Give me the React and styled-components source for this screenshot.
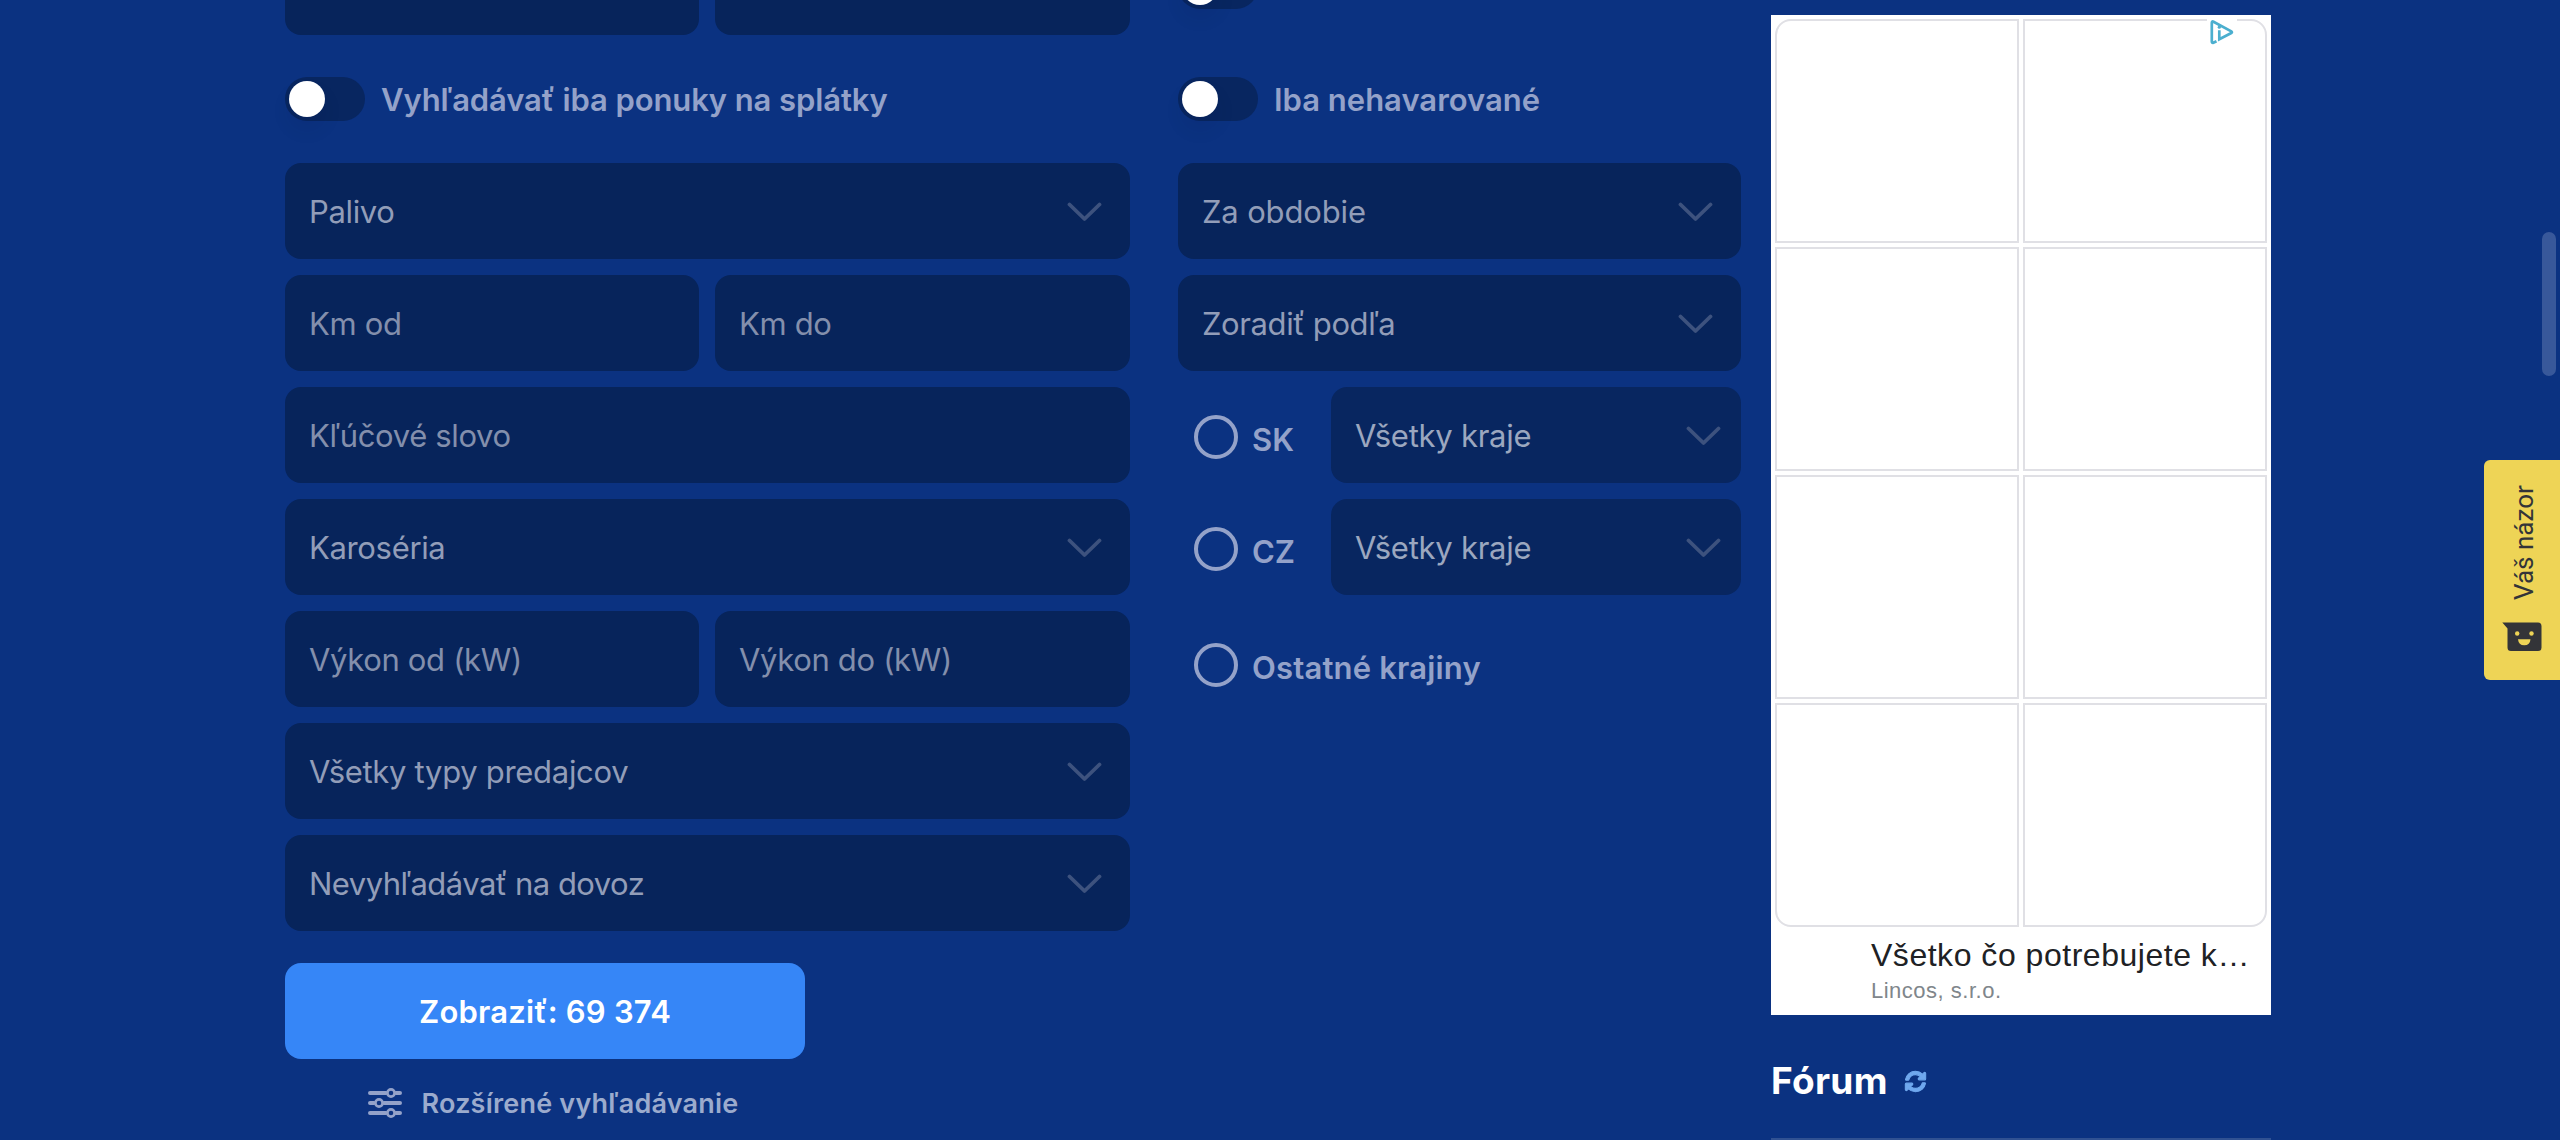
import React from "react";
import styled, { createGlobalStyle } from "styled-components";
import { FaSyncAlt } from "react-icons/fa";

const GlobalStyle = createGlobalStyle`
  *, *::before, *::after { box-sizing: border-box; }
  html, body { margin: 0; padding: 0; background: #0b3281; }
  body { font-family: Inter, "Noto Sans", sans-serif; }
`;

const Page = styled.div`
  position: relative;
  display: flex;
  width: 2560px;
  height: 1140px;
  padding-left: 285px;
  overflow: hidden;
  background: #0b3281;
`;

const Filters = styled.form`
  display: flex;
  align-items: flex-start;
  gap: 48px;
  margin: -61px 30px 0 0;
`;

const Column = styled.div`
  display: flex;
  flex-direction: column;
  gap: 16px;
  width: ${(p) => p.$width}px;
`;

const Pair = styled.div`
  display: grid;
  grid-template-columns: 414px 415px;
  gap: 16px;
`;

const Field = styled.div`
  display: flex;
  align-items: center;
  justify-content: space-between;
  flex: ${(p) => (p.$nested ? "0 0 410px" : "none")};
  height: 96px;
  padding: 1px ${(p) => (p.$nested ? 20 : 28)}px 0 24px;
  border-radius: 16px;
  background: ${(p) => (p.$nested ? "#082660" : "#07245b")};
  color: ${(p) => (p.$nested ? "#9ba7bf" : p.$input ? "#838fac" : "#929db8")};
  font-size: 31px;
  line-height: 38px;
  letter-spacing: ${(p) => p.$tracking ?? -0.34}px;
  white-space: nowrap;
`;

const ToggleRow = styled.label`
  display: flex;
  align-items: center;
  flex: none;
  gap: 16px;
  height: 96px;
`;

const Track = styled.span`
  display: flex;
  align-items: center;
  width: 80px;
  height: 44px;
  padding: 0 4px;
  border-radius: 22px;
  background: #082660;
`;

const Knob = styled.span`
  width: 36px;
  height: 36px;
  border-radius: 50%;
  background: #fff;
  box-shadow: 0 12px 20px rgba(0, 10, 50, 0.08);
`;

const Label = styled.span`
  padding-top: ${(p) => p.$drop ?? 1}px;
  color: #94a2c9;
  font-size: 31px;
  font-weight: 600;
  line-height: 38px;
  letter-spacing: ${(p) => p.$tracking ?? 0}px;
  white-space: nowrap;
`;

const RegionRow = styled.div`
  display: flex;
  align-items: center;
  justify-content: space-between;
  height: 96px;
  padding-left: 16px;
`;

const RadioLabel = styled.label`
  display: flex;
  align-items: center;
  gap: 14px;
  padding-top: ${(p) => p.$shift}px;
`;

const Radio = styled.span`
  width: 44px;
  height: 44px;
  border: 4px solid #94a2c9;
  border-radius: 50%;
`;

const Actions = styled.div`
  display: flex;
  flex-direction: column;
  align-items: center;
  width: 520px;
  margin-top: 16px;
`;

const Submit = styled.button`
  width: 100%;
  height: 96px;
  padding: 1px 0 0;
  border: 0;
  border-radius: 16px;
  background: #3686f7;
  color: #fff;
  font: 600 31px/38px Inter, sans-serif;
  letter-spacing: 0.22px;
`;

const Advanced = styled.a`
  display: flex;
  align-items: center;
  gap: 19px;
  height: 88px;
  margin-left: 17px;
  color: #9babcd;
  font-size: 27px;
  font-weight: 600;
  letter-spacing: 0.21px;
  white-space: nowrap;
`;

const Aside = styled.aside`
  display: flex;
  flex-direction: column;
  width: 500px;
  padding-top: 15px;
`;

const Ad = styled.section`
  position: relative;
  flex: none;
  height: 1000px;
  padding: 4px;
  background: #fff;
`;

const AdGrid = styled.div`
  display: grid;
  grid-template-columns: 1fr 1fr;
  grid-template-rows: repeat(4, 224px);
  gap: 4px;
`;

const AdTile = styled.div`
  border: 2px solid #e0e0e5;
  border-radius: ${(p) => p.$corners};
`;

const AdChoices = styled.div`
  position: absolute;
  top: 0;
  right: 34px;
  display: flex;
  align-items: flex-end;
  justify-content: center;
  width: 30px;
  height: 30px;
  background: #fff;
`;

const AdCopy = styled.div`
  padding: 10px 0 0 96px;
  font-family: "Liberation Sans", Arial, sans-serif;
  white-space: nowrap;
`;

const AdTitle = styled.div`
  color: #202124;
  font-size: 32px;
  line-height: 36px;
  letter-spacing: 0.52px;
`;

const AdSeller = styled.div`
  padding-top: 3px;
  color: #80868b;
  font-size: 22px;
  line-height: 30px;
  letter-spacing: 0.5px;
`;

const ForumHead = styled.header`
  display: flex;
  align-items: center;
  gap: 17px;
  flex: none;
  height: 125px;
  padding-top: 10px;
  border-bottom: 2px solid #305192;

  svg {
    overflow: visible;
    stroke: #6fa8ee;
    stroke-width: 26px;
  }
`;

const ForumTitle = styled.h2`
  margin: 0;
  padding: 0 0 2px;
  color: #fff;
  font-size: 37px;
  font-weight: 700;
  line-height: 44px;
  letter-spacing: 0.3px;
`;

const Feedback = styled.button`
  position: absolute;
  top: 460px;
  right: 0;
  display: flex;
  flex-direction: column;
  align-items: center;
  width: 76px;
  height: 220px;
  padding: 24px 0 0;
  border: 0;
  border-radius: 6px 0 0 6px;
  background: #eed456;
  color: #333438;
`;

const FeedbackText = styled.span`
  height: 118px;
  margin: 0 0 20px 3px;
  font: 400 26px/30px Roboto, sans-serif;
  writing-mode: vertical-rl;
  transform: rotate(180deg);
  white-space: nowrap;
`;

const Scrollbar = styled.div`
  position: absolute;
  top: 232px;
  right: 4px;
  width: 14px;
  height: 144px;
  border-radius: 7px;
  background: #38589a;
`;

const Chevron = () => (
  <svg width="35" height="20" viewBox="0 0 35 20" fill="none">
    <path d="M2.5 2.5 L17.5 17 L32.5 2.5" stroke="#3d527e" strokeWidth="3.8" strokeLinecap="round" strokeLinejoin="round" />
  </svg>
);

const SlidersIcon = () => (
  <svg width="34" height="30" viewBox="0 0 34 30" fill="none" stroke="#94a2c9" strokeLinecap="round">
    <path strokeWidth="4" d="M2 5H18M28 5H32M2 15H6M16 15H32M2 25H18M28 25H32" />
    <g strokeWidth="2.6">
      <circle cx="23" cy="5" r="3.6" />
      <circle cx="11" cy="15" r="3.6" />
      <circle cx="23" cy="25" r="3.6" />
    </g>
  </svg>
);

const AdChoicesIcon = () => (
  <svg width="24" height="25" viewBox="0 0 24 25" fill="none">
    <path d="M6.5 21.3 L3.4 22.8 Q1.8 23.3 1.8 21.5 V2.9 Q1.8 0.9 3.500 1.700 L21.300 11.300 Q22.600 12.200 21.300 13 L9.300 19.300 V10.200" stroke="#4bafcf" strokeWidth="2.7" />
    <circle cx="9.3" cy="7.2" r="1.6" fill="#4bafcf" />
  </svg>
);

const SmileyIcon = () => (
  <svg width="40" height="30" viewBox="0 0 40 30">
    <path d="M0.3 0.5H36Q39.5 0.5 39.5 4V25.5Q39.5 29 36 29H9Q5.5 29 5.5 25.5V6.5Z" fill="#333438" />
    <circle cx="15.2" cy="11.5" r="2.2" fill="#eed456" />
    <circle cx="29.5" cy="11.5" r="2.2" fill="#eed456" />
    <path d="M16 17.3H28.5Q28 23.3 22.25 23.3Q16.5 23.3 16 17.3Z" fill="#eed456" />
  </svg>
);

const Select = ({ children, ...rest }) => (
  <Field {...rest}>
    <span>{children}</span>
    <Chevron />
  </Field>
);

const Toggle = ({ children, tracking }) => (
  <ToggleRow>
    <Track><Knob /></Track>
    {children && <Label $tracking={tracking}>{children}</Label>}
  </ToggleRow>
);

const tileCorners = ["16px 0 0 0", "0 16px 0 0", "0", "0", "0", "0", "0 0 0 16px", "0 0 16px 0"];

export default function App() {
  return (
    <Page>
      <GlobalStyle />
      <Filters>
        <Column $width={845}>
          <Pair><Field /><Field /></Pair>
          <Toggle tracking={-0.1}>Vyhľadávať iba ponuky na splátky</Toggle>
          <Select>Palivo</Select>
          <Pair><Field $input>Km od</Field><Field $input>Km do</Field></Pair>
          <Field $input>Kľúčové slovo</Field>
          <Select>Karoséria</Select>
          <Pair><Field $input>Výkon od (kW)</Field><Field $input>Výkon do (kW)</Field></Pair>
          <Select $tracking={-0.3}>Všetky typy predajcov</Select>
          <Select $tracking={-0.54}>Nevyhľadávať na dovoz</Select>
          <Actions>
            <Submit type="button">Zobraziť: 69 374</Submit>
            <Advanced><SlidersIcon />Rozšírené vyhľadávanie</Advanced>
          </Actions>
        </Column>
        <Column $width={563}>
          <Toggle />
          <Toggle>Iba nehavarované</Toggle>
          <Select $tracking={-0.15}>Za obdobie</Select>
          <Select $tracking={-0.4}>Zoradiť podľa</Select>
          {["SK", "CZ"].map((code) => (
            <RegionRow key={code}>
              <RadioLabel $shift={4}><Radio /><Label $drop={5}>{code}</Label></RadioLabel>
              <Select $nested $tracking={-0.26}>Všetky kraje</Select>
            </RegionRow>
          ))}
          <RegionRow>
            <RadioLabel $shift={12}><Radio /><Label $drop={5} $tracking={0.18}>Ostatné krajiny</Label></RadioLabel>
          </RegionRow>
        </Column>
      </Filters>
      <Aside>
        <Ad>
          <AdGrid>
            {tileCorners.map((corners, i) => <AdTile key={i} $corners={corners} />)}
          </AdGrid>
          <AdChoices><AdChoicesIcon /></AdChoices>
          <AdCopy>
            <AdTitle>Všetko čo potrebujete k…</AdTitle>
            <AdSeller>Lincos, s.r.o.</AdSeller>
          </AdCopy>
        </Ad>
        <ForumHead>
          <ForumTitle>Fórum</ForumTitle>
          <FaSyncAlt size={21} color="#6fa8ee" />
        </ForumHead>
      </Aside>
      <Scrollbar />
      <Feedback type="button">
        <FeedbackText>Váš názor</FeedbackText>
        <SmileyIcon />
      </Feedback>
    </Page>
  );
}
